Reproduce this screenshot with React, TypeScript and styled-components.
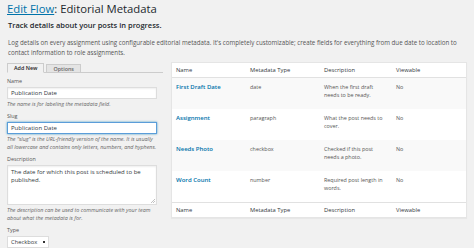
import React from 'react';
import styled, { createGlobalStyle } from 'styled-components';

const GlobalStyle = createGlobalStyle`
    html, body {
        margin: 0;
        padding: 0;
        background: #f1f1f1;
        font-family: "Open Sans", "Liberation Sans", sans-serif;
        color: #444;
        overflow: hidden;
    }
`;

const Page = styled.div({
    padding: '1px 7px 0 7px',
    width: 474,
    height: 248,
    boxSizing: 'border-box'
});

const Title = styled.h1({
    margin: 0,
    fontSize: 11.3,
    fontWeight: 400,
    lineHeight: '15px',
    color: '#23282d'
});

const TitleLink = styled.a({
    color: '#0073aa',
    textDecoration: 'underline'
});

const Subtitle = styled.h3({
    margin: '4px 0 0 1px',
    fontSize: 7.5,
    fontWeight: 600,
    lineHeight: '10px',
    color: '#23282d'
});

const Intro = styled.p({
    margin: '8px 0 0 1px',
    fontSize: 6.2,
    lineHeight: '10px',
    color: '#555'
});

const Columns = styled.div({
    display: 'flex',
    alignItems: 'flex-start',
    gap: 8,
    marginTop: 4
});

const FormCol = styled.div({
    width: 156,
    flex: 'none'
});

const Tabs = styled.div({
    display: 'flex',
    gap: 2,
    borderBottom: '1px solid #ccc',
    height: 10,
    alignItems: 'flex-end',
    marginBottom: 3
});

const Tab = styled.div<{ $active?: boolean }>`
    height: ${(p) => (p.$active ? '10px' : '9px')};
    padding: 0 6px;
    margin-bottom: -1px;
    border: 1px solid #ccc;
    border-bottom-color: ${(p) => (p.$active ? '#f1f1f1' : '#ccc')};
    background: ${(p) => (p.$active ? '#f1f1f1' : '#e4e4e4')};
    color: ${(p) => (p.$active ? '#222' : '#666')};
    font-size: 5.4px;
    font-weight: 600;
    line-height: 9px;
    box-sizing: border-box;
`;

const Field = styled.div({
    width: 150,
    marginTop: 5
});

const Label = styled.label({
    display: 'block',
    fontSize: 5.4,
    lineHeight: '7px',
    color: '#555',
    marginBottom: 2
});

const Input = styled.div<{ $focus?: boolean }>`
    height: 12px;
    box-sizing: border-box;
    background: #fff;
    border: 1px solid ${(p) => (p.$focus ? '#5b9dd9' : '#ddd')};
    box-shadow: ${(p) => (p.$focus ? '0 0 2px rgba(30,140,190,.8)' : 'inset 0 1px 2px rgba(0,0,0,.07)')};
    padding: 0 3px;
    font-size: 6px;
    line-height: 10px;
    color: #32373c;
`;

const TextArea = styled.div`
    position: relative;
    height: 40px;
    box-sizing: border-box;
    background: #fff;
    border: 1px solid #ddd;
    box-shadow: inset 0 1px 2px rgba(0, 0, 0, .07);
    padding: 2px 3px;
    font-size: 6px;
    line-height: 8px;
    color: #32373c;
`;

const Grip = styled.svg({
    position: 'absolute',
    right: 1,
    bottom: 1
});

const Help = styled.p({
    margin: '1px 0 0 0',
    fontSize: 5.4,
    fontStyle: 'italic',
    lineHeight: '8px',
    color: '#666'
});

const Select = styled.div({
    width: 42,
    height: 12,
    boxSizing: 'border-box',
    background: '#fff',
    border: '1px solid #ddd',
    display: 'flex',
    alignItems: 'center',
    justifyContent: 'space-between',
    padding: '0 3px 0 3px',
    fontSize: 5.8,
    color: '#32373c'
});

const Caret = styled.span({
    width: 2.5,
    height: 2.5,
    background: '#333'
});

const Table = styled.div({
    width: 296,
    background: '#fff',
    border: '1px solid #e5e5e5',
    boxShadow: '0 1px 1px rgba(0,0,0,.04)',
    boxSizing: 'border-box'
});

const Row = styled.div<{ $alt?: boolean; $head?: boolean; $foot?: boolean }>`
    display: grid;
    grid-template-columns: 74px 74px 72px 1fr;
    background: ${(p) => (p.$alt ? '#f9f9f9' : '#fff')};
    height: ${(p) => (p.$head || p.$foot ? '15px' : '31px')};
    border-bottom: ${(p) => (p.$head ? '1px solid #e1e1e1' : 'none')};
    border-top: ${(p) => (p.$foot ? '1px solid #e1e1e1' : 'none')};
    box-sizing: border-box;
    align-items: ${(p) => (p.$head || p.$foot ? 'center' : 'start')};
    padding-top: ${(p) => (p.$head || p.$foot ? '0' : '5px')};
`;

const HeadCell = styled.div({
    paddingLeft: 4,
    fontSize: 5.8,
    color: '#32373c'
});

const Cell = styled.div({
    paddingLeft: 4,
    paddingRight: 6,
    fontSize: 5.4,
    lineHeight: '8px',
    color: '#555'
});

const NameLink = styled.a({
    paddingLeft: 4,
    fontSize: 6,
    lineHeight: '8px',
    fontWeight: 600,
    color: '#0073aa',
    textDecoration: 'none'
});

const fields = [
    { name: 'First Draft Date', type: 'date', desc: 'When the first draft needs to be ready.' },
    { name: 'Assignment', type: 'paragraph', desc: 'What the post needs to cover.' },
    { name: 'Needs Photo', type: 'checkbox', desc: 'Checked if this post needs a photo.' },
    { name: 'Word Count', type: 'number', desc: 'Required post length in words.' }
];

const headings = ['Name', 'Metadata Type', 'Description', 'Viewable'];

export default function App() {
    return (
        <Page>
            <GlobalStyle />
            <Title><TitleLink>Edit Flow</TitleLink>: Editorial Metadata</Title>
            <Subtitle>Track details about your posts in progress.</Subtitle>
            <Intro>
                Log details on every assignment using configurable editorial metadata. It's completely customizable; create fields for everything from due date to location to contact information to role assignments.
            </Intro>
            <Columns>
                <FormCol>
                    <Tabs>
                        <Tab $active>Add New</Tab>
                        <Tab>Options</Tab>
                    </Tabs>
                    <Field>
                        <Label>Name</Label>
                        <Input>Publication Date</Input>
                        <Help>The name is for labeling the metadata field.</Help>
                    </Field>
                    <Field>
                        <Label>Slug</Label>
                        <Input $focus>Publication Date</Input>
                        <Help>The "slug" is the URL-friendly version of the name. It is usually all lowercase and contains only letters, numbers, and hyphens.</Help>
                    </Field>
                    <Field>
                        <Label>Description</Label>
                        <TextArea>
                            The date for which this post is scheduled to be published.
                            <Grip width="4" height="4" viewBox="0 0 4 4">
                                <path d="M4 0L0 4M4 2L2 4" stroke="#999" strokeWidth="0.6" />
                            </Grip>
                        </TextArea>
                        <Help>The description can be used to communicate with your team about what the metadata is for.</Help>
                    </Field>
                    <Field>
                        <Label>Type</Label>
                        <Select>Checkbox<Caret /></Select>
                    </Field>
                </FormCol>
                <Table>
                    <Row $head>
                        {headings.map((h) => <HeadCell key={h}>{h}</HeadCell>)}
                    </Row>
                    {fields.map((f, i) => (
                        <Row key={f.name} $alt={i % 2 === 0}>
                            <NameLink>{f.name}</NameLink>
                            <Cell>{f.type}</Cell>
                            <Cell>{f.desc}</Cell>
                            <Cell>No</Cell>
                        </Row>
                    ))}
                    <Row $foot>
                        {headings.map((h) => <HeadCell key={h}>{h}</HeadCell>)}
                    </Row>
                </Table>
            </Columns>
        </Page>
    );
}
